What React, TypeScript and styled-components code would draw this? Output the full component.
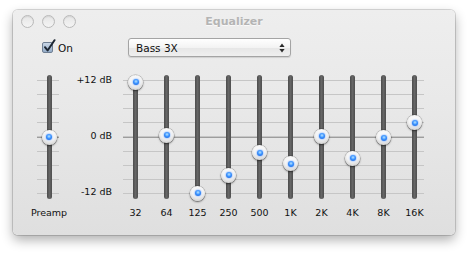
import React from "react";
import styled, { createGlobalStyle } from "styled-components";

const Global = createGlobalStyle`
  html, body { margin: 0; padding: 0; background: #ffffff; }
  body { font-family: "DejaVu Sans", "Liberation Sans", sans-serif; }
`;

const Page = styled.div`
  padding: 10px 0 0 13px;
  width: 468px;
  height: 255px;
  box-sizing: border-box;
`;

const Window = styled.div`
  width: 442px;
  height: 225px;
  border-radius: 5px;
  background: linear-gradient(#eeeeee, #e9e9e9 40%, #dfdfdf);
  box-shadow: 0 0 0 1px rgba(0, 0, 0, 0.14), 0 5px 12px rgba(0, 0, 0, 0.32);
  display: flex;
  flex-direction: column;
  overflow: hidden;
`;

const TitleBar = styled.div`
  height: 22px;
  display: grid;
  grid-template-columns: 1fr auto 1fr;
  align-items: center;
`;

const Lights = styled.div`
  display: flex;
  gap: 8px;
  padding-left: 8px;
`;

const Light = styled.span`
  width: 11px;
  height: 11px;
  border-radius: 50%;
  border: 1px solid #b9b9b9;
  background: linear-gradient(#e6e6e6, #f4f4f4);
  box-shadow: inset 0 1px 1px rgba(0, 0, 0, 0.08);
`;

const Title = styled.div`
  font-size: 11px;
  font-weight: bold;
  color: #b4b4b4;
  text-shadow: 0 1px 0 rgba(255, 255, 255, 0.7);
  padding-top: 1px;
`;

const ControlRow = styled.div`
  display: flex;
  align-items: center;
  margin-top: 6px;
  padding-left: 29px;
  height: 19px;
`;

const CheckGroup = styled.label`
  width: 86px;
  display: flex;
  align-items: center;
  gap: 5px;
  font-size: 10.5px;
  color: #111;
`;

const CheckBox = styled.span`
  width: 11px;
  height: 11px;
  box-sizing: border-box;
  border: 1px solid #6f7f93;
  border-radius: 2px;
  background: linear-gradient(#c9d6e6, #94acc8);
  position: relative;
  display: block;
`;

const CheckMark = styled.svg`
  position: absolute;
  left: 0px;
  top: -4px;
`;

const Popup = styled.div`
  width: 163px;
  height: 19px;
  box-sizing: border-box;
  border: 1px solid #a4a4a4;
  border-radius: 3px;
  background: linear-gradient(#ffffff, #f3f3f3 50%, #e6e6e6 51%, #efefef);
  box-shadow: 0 1px 1px rgba(0, 0, 0, 0.12);
  display: flex;
  align-items: center;
  justify-content: space-between;
  padding: 0 5px 0 7px;
  font-size: 10.5px;
  color: #111;
`;

const Sliders = styled.div`
  display: flex;
  align-items: flex-start;
  margin-top: 18px;
  padding-left: 16px;
`;

const Column = styled.div<{ $w: number }>`
  width: ${(p) => p.$w}px;
  display: flex;
  flex-direction: column;
  align-items: center;
`;

const TrackArea = styled.div<{ $lines?: boolean }>`
  position: relative;
  width: 100%;
  height: 124px;
  display: flex;
  justify-content: center;
`;

const PreampLines = styled.div`
  position: absolute;
  left: 8px;
  width: 22px;
  top: 5px;
  height: 115px;
  background: linear-gradient(#9d9d9d, #9d9d9d) 0 56.5px / 100% 1px no-repeat,
    repeating-linear-gradient(to bottom, #c6c6c6 0 1px, transparent 1px 14.125px);
`;

const Track = styled.div`
  width: 5px;
  height: 100%;
  border-radius: 3px;
  background: linear-gradient(to right, #4c4c4c, #666666 50%, #4e4e4e);
  position: relative;
  z-index: 1;
`;

const Knob = styled.div`
  position: absolute;
  left: 50%;
  width: 15px;
  height: 15px;
  margin-left: -7.5px;
  margin-top: -7.5px;
  border-radius: 50%;
  z-index: 2;
  background: radial-gradient(circle at 50% 35%, #ffffff 0, #f4f4f4 45%, #d2d2d2 80%, #bdbdbd 100%);
  box-shadow: 0 1px 2px rgba(0, 0, 0, 0.5), 0 0 0 0.5px rgba(0, 0, 0, 0.25);
  display: flex;
  align-items: center;
  justify-content: center;
`;

const KnobDot = styled.span`
  width: 6px;
  height: 6px;
  border-radius: 50%;
  background: radial-gradient(circle at 50% 40%, #b8e4ff 0, #3b93ff 45%, #0d55d6 100%);
  box-shadow: 0 0 2px rgba(40, 120, 255, 0.9);
`;

const Label = styled.div`
  margin-top: 8px;
  font-size: 9.5px;
  line-height: 12px;
  color: #111;
  white-space: nowrap;
`;

const DbScale = styled.div`
  width: 43px;
  height: 124px;
  margin-top: -1px;
  display: flex;
  flex-direction: column;
  justify-content: space-between;
  align-items: flex-end;
  font-size: 9.5px;
  line-height: 12px;
  color: #111;
`;

const Bands = styled.div`
  display: flex;
  margin-left: 8px;
  position: relative;
`;

const BandLines = styled.div`
  position: absolute;
  left: 3px;
  width: 301px;
  top: 5px;
  height: 115px;
  background: linear-gradient(#9d9d9d, #9d9d9d) 0 56.5px / 100% 1px no-repeat,
    repeating-linear-gradient(to bottom, #c6c6c6 0 1px, transparent 1px 14.125px);
`;

const TRACK_MID = 62;
const PX_PER_DB = 4.7;

function Slider({ db }: { db: number }) {
  const top = TRACK_MID - db * PX_PER_DB;
  return (
    <>
      <Track />
      <Knob style={{ top }}>
        <KnobDot />
      </Knob>
    </>
  );
}

const bands: [string, number][] = [
  ["32", 11.7],
  ["64", 0.4],
  ["125", -12],
  ["250", -8.1],
  ["500", -3.4],
  ["1K", -5.7],
  ["2K", 0.2],
  ["4K", -4.5],
  ["8K", -0.2],
  ["16K", 3.0],
];

function Arrows() {
  return (
    <svg width="6" height="10" viewBox="0 0 6 10">
      <path d="M3 0.5 L5.6 4 L0.4 4 Z" fill="#2a2a2a" />
      <path d="M3 9.5 L5.6 6 L0.4 6 Z" fill="#2a2a2a" />
    </svg>
  );
}

export default function App() {
  return (
    <Page>
      <Global />
      <Window>
        <TitleBar>
          <Lights>
            <Light />
            <Light />
            <Light />
          </Lights>
          <Title>Equalizer</Title>
          <div />
        </TitleBar>
        <ControlRow>
          <CheckGroup>
            <CheckBox>
              <CheckMark width="13" height="14" viewBox="0 0 13 14">
                <path
                  d="M2 8.2 L4.6 11.5 L11.5 1.2"
                  fill="none"
                  stroke="#1d2733"
                  strokeWidth="2"
                  strokeLinecap="round"
                  strokeLinejoin="round"
                />
              </CheckMark>
            </CheckBox>
            On
          </CheckGroup>
          <Popup>
            <span>Bass 3X</span>
            <Arrows />
          </Popup>
        </ControlRow>
        <Sliders>
          <Column $w={40}>
            <TrackArea>
              <PreampLines />
              <Slider db={0} />
            </TrackArea>
            <Label>Preamp</Label>
          </Column>
          <DbScale>
            <span>+12 dB</span>
            <span>0 dB</span>
            <span>-12 dB</span>
          </DbScale>
          <Bands>
            <BandLines />
            {bands.map(([name, db]) => (
              <Column $w={31} key={name}>
                <TrackArea>
                  <Slider db={db} />
                </TrackArea>
                <Label>{name}</Label>
              </Column>
            ))}
          </Bands>
        </Sliders>
      </Window>
    </Page>
  );
}
